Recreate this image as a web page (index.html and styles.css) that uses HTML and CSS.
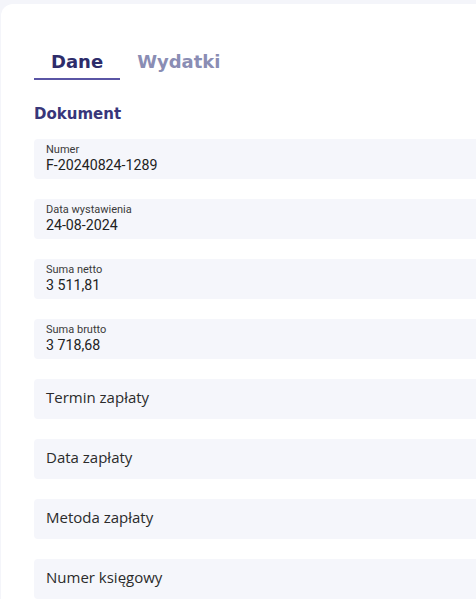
FILE: index.html
```html
<!DOCTYPE html>
<html lang="pl">
<head>
<meta charset="utf-8">
<title>Dokument</title>
<link rel="stylesheet" href="styles.css">
</head>
<body>
<div class="page">
  <div class="card">
    <nav class="tabs">
      <span class="tab active">Dane</span>
      <span class="tab">Wydatki</span>
    </nav>
    <h2 class="section-title">Dokument</h2>
    <div class="fields">
      <div class="field filled">
        <span class="label">Numer</span>
        <span class="value">F-20240824-1289</span>
      </div>
      <div class="field filled">
        <span class="label">Data wystawienia</span>
        <span class="value">24-08-2024</span>
      </div>
      <div class="field filled">
        <span class="label">Suma netto</span>
        <span class="value">3 511,81</span>
      </div>
      <div class="field filled">
        <span class="label">Suma brutto</span>
        <span class="value">3 718,68</span>
      </div>
      <div class="field empty"><span class="placeholder">Termin zapłaty</span></div>
      <div class="field empty"><span class="placeholder">Data zapłaty</span></div>
      <div class="field empty"><span class="placeholder">Metoda zapłaty</span></div>
      <div class="field empty"><span class="placeholder">Numer księgowy</span></div>
    </div>
  </div>
</div>
</body>
</html>
```
FILE: styles.css
```css
html, body {
  margin: 0;
  padding: 0;
  background: #ffffff;
  overflow: hidden;
}
body {
  font-family: "Open Sans", "Noto Sans", sans-serif;
  color: #262626;
}
.page {
  background: #f4f5fa;
  height: 599px;
  padding: 4px 0 0 1px;
  box-sizing: border-box;
  overflow: hidden;
}
.card {
  background: #ffffff;
  border-top-left-radius: 12px;
  height: 100%;
  padding: 46px 0 0 33px;
  box-sizing: border-box;
}
.tabs {
  display: flex;
}
.tab {
  font-family: "DejaVu Sans", sans-serif;
  font-weight: 700;
  font-size: 18px;
  line-height: 24px;
  padding: 0 17px 4px;
  color: #8a8db4;
  border-bottom: 2px solid transparent;
}
.tab.active {
  color: #2d2c6a;
  border-bottom-color: #5a55a5;
}
.section-title {
  font-family: "DejaVu Sans", sans-serif;
  font-weight: 700;
  font-size: 15px;
  line-height: 20px;
  color: #38367a;
  margin: 24px 0 15px;
}
.fields {
  display: flex;
  flex-direction: column;
  gap: 20px;
}
.field {
  height: 40px;
  background: #f5f6fb;
  border-radius: 4px 0 0 4px;
  box-sizing: border-box;
  padding-left: 12px;
  display: flex;
  flex-direction: column;
}
.field.filled {
  padding-top: 5px;
}
.label {
  font-family: Roboto, "Open Sans", sans-serif;
  font-size: 11px;
  line-height: 12.5px;
  color: #3a3a3a;
}
.value {
  font-family: Roboto, "Open Sans", sans-serif;
  font-size: 14.2px;
  line-height: 17px;
  color: #222222;
}
.field.empty {
  padding-top: 8px;
}
.placeholder {
  font-size: 15px;
  line-height: 20px;
  color: #2b2b2b;
}
```
